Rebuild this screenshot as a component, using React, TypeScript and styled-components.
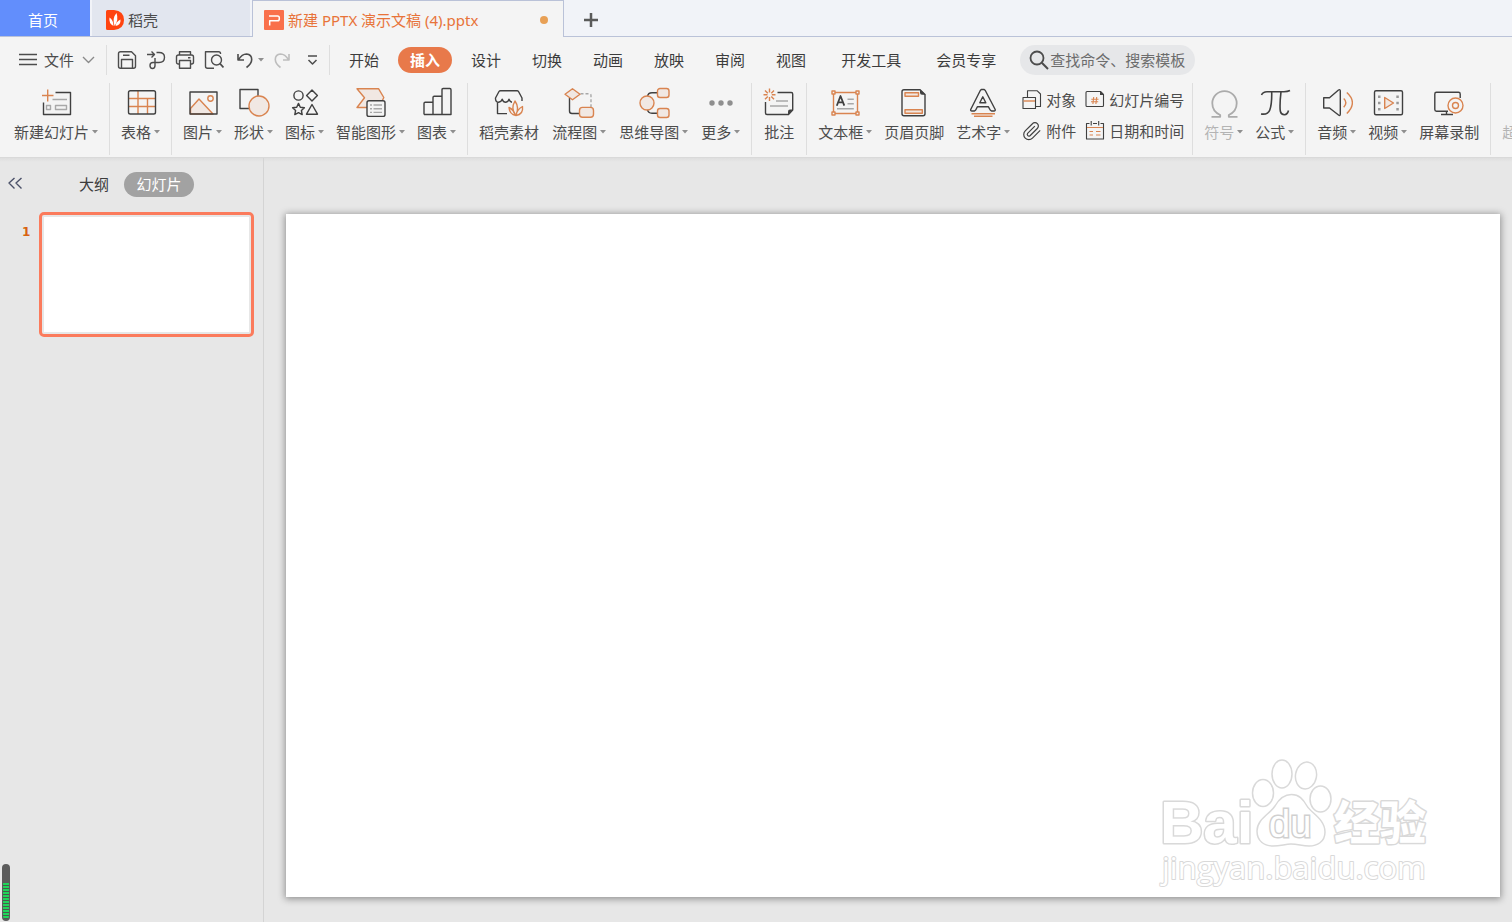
import React from "react";
import styled, { createGlobalStyle, css } from "styled-components";

const color = {
  chrome: "#f4f4f4",
  strip: "#f1f3f8",
  stripBorder: "#bac2d8",
  work: "#e7e7e7",
  text: "#4c4c4c",
  ink: "#404040",
  muted: "#b4b4b4",
  accent: "#e8794a",
  orange: "#d98450",
  tint: "#f1e8e3",
  line: "#dedede",
};

const GlobalStyle = createGlobalStyle`
  *, *::before, *::after { box-sizing: border-box; }
  body {
    margin: 0;
    background: ${color.work};
    color: ${color.text};
    font: 15px/20px "Noto Sans", "Noto Sans CJK SC", sans-serif;
  }
  button, input { font: inherit; color: inherit; }
`;

const PlainButton = styled.button`
  display: flex;
  align-items: center;
  justify-content: center;
  flex: none;
  margin: 0;
  padding: 0;
  border: 0;
  background: none;
  white-space: nowrap;
  cursor: pointer;
`;

const Window = styled.div`
  display: flex;
  flex-direction: column;
  min-height: 100vh;
  overflow: hidden;
`;

/* ---------- document tabs ---------- */

const TabStrip = styled.nav`
  display: flex;
  height: 37px;
  background: linear-gradient(${color.stripBorder}, ${color.stripBorder}) bottom / 100% 1px no-repeat ${color.strip};
`;

const HomeTab = styled(PlainButton)`
  width: 90px;
  height: 36px;
  padding-right: 4px;
  padding-top: 3px;
  background: #628efc;
  color: #fff;
`;

const DocTab = styled(PlainButton)<{ $active?: boolean; $width: number }>`
  justify-content: flex-start;
  gap: 4px;
  width: ${(p) => p.$width}px;
  height: 36px;
  margin-left: 2px;
  padding: 4px 14px 0;
  background: #e2e6ef;
  ${(p) =>
    p.$active &&
    css`
      height: 37px;
      padding: 2px 15px 0 11px;
      border: 1px solid ${color.stripBorder};
      border-bottom: 0;
      background: ${color.chrome};
      color: #e87339;
    `}
`;

const UnsavedDot = styled.span`
  width: 8px;
  height: 8px;
  margin-left: auto;
  border-radius: 50%;
  background: #e8a055;
`;

const AddTab = styled(PlainButton)`
  width: 54px;
  height: 36px;
  padding-top: 3px;
`;

/* ---------- menu row ---------- */

const MenuRow = styled.div`
  display: flex;
  align-items: center;
  height: 46px;
  background: ${color.chrome};
`;

const FileButton = styled(PlainButton)`
  gap: 7px;
  width: 107px;
  height: 30px;
  padding-left: 8px;
  border-right: 1px solid ${color.line};
`;

const QuickBar = styled.div`
  display: flex;
  align-items: center;
  gap: 9px;
  height: 30px;
  width: 223px;
  padding-left: 10px;
  flex: none;
  border-right: 1px solid ${color.line};
`;

const QuickButton = styled(PlainButton)<{ $disabled?: boolean }>`
  gap: 2px;
  color: ${(p) => (p.$disabled ? "#bdbdbd" : "#4c4c4c")};
`;

const Tabs = styled.div<{ $gap: number }>`
  display: flex;
  flex: none;
  gap: ${(p) => p.$gap}px;
  padding-left: ${(p) => p.$gap}px;
`;

const RibbonTab = styled(PlainButton)<{ $active?: boolean }>`
  height: 26px;
  padding: 0 12px;
  border-radius: 13px;
  color: #3c3c3c;
  ${(p) =>
    p.$active &&
    css`
      background: ${color.accent};
      color: #fff;
      font-weight: 700;
    `}
`;

const SearchBox = styled.label`
  display: flex;
  align-items: center;
  flex: none;
  width: 175px;
  height: 30px;
  margin-left: 12px;
  padding: 0 9px;
  border-radius: 15px;
  background: #e6e7e9;
`;

const SearchInput = styled.input`
  flex: 1;
  min-width: 0;
  height: 20px;
  margin-left: 1px;
  padding: 0;
  border: 0;
  outline: 0;
  background: none;
  &::placeholder {
    color: #6c6c6c;
    opacity: 1;
  }
`;

/* ---------- ribbon ---------- */

const Ribbon = styled.div`
  display: flex;
  height: 75px;
  padding-left: 3px;
  overflow: hidden;
  background: ${color.chrome};
  border-bottom: 1px solid #d9d9d9;
`;

const Group = styled.div<{ $gap?: number }>`
  display: flex;
  flex: none;
  gap: ${(p) => p.$gap ?? 0}px;
  height: 72px;
  padding: 0 5px;
  border-right: 1px solid ${color.line};
`;

const Tool = styled(PlainButton)<{ $disabled?: boolean }>`
  flex-direction: column;
  justify-content: flex-start;
  gap: 3px;
  padding: 4px 6px 0;
  color: ${(p) => (p.$disabled ? color.muted : color.text)};
`;

const ToolLabel = styled.span`
  display: flex;
  align-items: center;
  gap: 3px;
`;

const SmallTools = styled.div`
  display: grid;
  grid-template-columns: auto auto;
  align-content: start;
  gap: 11px 9px;
  padding: 7px 3px 0 6px;
`;

const SmallTool = styled(PlainButton)`
  justify-content: flex-start;
  gap: 4px;
  height: 20px;
`;

/* ---------- workspace ---------- */

const Workspace = styled.main`
  display: flex;
  flex: 1;
  background: linear-gradient(#dedede, ${color.work} 4px);
`;

const Sidebar = styled.aside`
  flex: none;
  width: 264px;
  padding-top: 14px;
  border-right: 1px solid #d4d4d4;
`;

const SideHead = styled.div`
  display: flex;
  align-items: center;
  height: 25px;
  padding-left: 7px;
`;

const OutlineTab = styled(PlainButton)`
  margin-left: 56px;
  padding-bottom: 2px;
  color: #3c3c3c;
`;

const SlidesTab = styled(PlainButton)`
  width: 70px;
  height: 25px;
  margin-left: 15px;
  padding-bottom: 2px;
  border-radius: 13px;
  background: #a2a2a2;
  color: #fff;
`;

const CollapseButton = styled(PlainButton)`
  padding-bottom: 2px;
`;

const ThumbRow = styled.div`
  display: flex;
  margin: 15px 9px 0 0;
`;

const ThumbNumber = styled.span`
  width: 39px;
  padding: 10px 0 0 22px;
  flex: none;
  color: #d8620f;
  font: 700 12px/20px "DejaVu Sans", sans-serif;
`;

const Thumb = styled(PlainButton)`
  flex: 1;
  height: 125px;
  border: 3px solid #fb7b5c;
  border-radius: 5px;
  background: #fff;
  box-shadow: inset 0 0 0 2px #e7e7e7;
`;

const Stage = styled.section`
  flex: 1;
  min-width: 0;
  padding: 56px 12px 24px 22px;
`;

const Slide = styled.div`
  position: relative;
  aspect-ratio: 16 / 9;
  background: #fff;
  box-shadow: 0 1px 7px 1px rgba(0, 0, 0, 0.38);
`;

const Watermark = styled.svg`
  position: absolute;
  right: 65px;
  bottom: 5px;
  width: 280px;
  height: 137px;
`;

const LevelMeter = styled.div`
  position: absolute;
  left: 2px;
  bottom: 1px;
  width: 8px;
  height: 57px;
  padding: 19px 1px 2px;
  border-radius: 4px;
  background: #5c5c5c;
`;

const LevelBars = styled.div`
  height: 100%;
  border-radius: 0 0 3px 3px;
  background: repeating-linear-gradient(#1fd65a 0 2px, #4a5a4e 2px 3px);
`;

/* ---------- icons ---------- */

const Svg = styled.svg<{ $w: number; $h: number }>`
  display: block;
  flex: none;
  width: ${(p) => p.$w}px;
  height: ${(p) => p.$h}px;
  fill: none;
  stroke: currentColor;
  stroke-width: 1.4;
  stroke-linejoin: round;
  .k { stroke: ${color.ink}; }
  .o { stroke: ${color.orange}; }
  .t { stroke: ${color.orange}; fill: ${color.tint}; }
  .g { stroke: #a8a8a8; }
  .ko { fill: ${color.ink}; stroke: none; }
  .c { fill: ${color.chrome}; }
`;

type IconProps = { w?: number; h?: number; children: React.ReactNode };
const Icon = ({ w = 32, h = w, children }: IconProps) => (
  <Svg $w={w} $h={h} viewBox={`0 0 ${w} ${h}`} aria-hidden="true">
    {children}
  </Svg>
);

const Caret = () => (
  <Icon w={6} h={4}>
    <path d="M0 0H6L3 3.6Z" fill="#8f8f8f" stroke="none" />
  </Icon>
);

const art = {
  newSlide: (
    <>
      <path className="k" d="M15.5 5.5H30.5V27.5H3.5V15.5" />
      <path className="o" d="M2 8.5H13.5M7.7 2.5V14.5" />
      <path className="g" d="M12.5 12.5H27M6.5 18.5H10.5V22.5H6.5ZM15.5 18.5H26.5V22.5H15.5Z" />
    </>
  ),
  table: (
    <>
      <path className="o" d="M13 4V27M22.5 11.5V27M4 11.5H30M4 19.5H30" />
      <rect className="k" x="3.5" y="3.7" width="27" height="23.3" rx="1.8" />
    </>
  ),
  picture: (
    <>
      <path className="t" d="M3.5 21.5L12 12L26 27H3.5Z" />
      <circle className="o" cx="23.5" cy="11.5" r="2.7" />
      <rect className="k" x="3" y="5" width="27" height="22" />
    </>
  ),
  shape: (
    <>
      <rect className="k" x="2" y="2.5" width="18" height="19" />
      <circle className="t" cx="21" cy="19" r="10" />
    </>
  ),
  glyphs: (
    <g className="k">
      <circle cx="9.5" cy="8.5" r="4.6" />
      <path d="M23 3L28.4 8.5L23 14L17.6 8.5Z" />
      <path d="M9.5 16.4L11.3 20.2L15.4 20.7L12.4 23.5L13.2 27.6L9.5 25.6L5.8 27.6L6.6 23.5L3.6 20.7L7.7 20.2Z" />
      <path d="M23 17.5L28.5 27.2H17.5Z" />
    </g>
  ),
  smart: (
    <>
      <path className="t" d="M2 1.7H23.5L28.8 10.5L24 20.5H2L9.5 10.8Z" />
      <rect className="k c" x="12" y="13.8" width="18" height="15.6" rx="2" />
      <path className="g" d="M15 18H17M18.5 18H27M15 21.7H17M18.5 21.7H27M15 25.4H17M18.5 25.4H27" />
    </>
  ),
  chart: (
    <path
      className="k"
      d="M3 27.5V16.5Q3 15.3 4.2 15.3H12V27.5M12 27.5V10.5Q12 9.3 13.2 9.3H21V27.5M21 27.5V2.7Q21 1.5 22.2 1.5H28.8Q30 1.5 30 2.7V27.5ZM3 27.5H30"
    />
  ),
  store: (
    <>
      <path className="k" d="M29 14V11L25.5 4.5Q25 3.7 24 3.7H7.5Q6.5 3.7 6 4.5L2.5 11Q2.3 15 5.5 15.3Q8.5 15 9.2 12.2Q10.2 15.3 12.8 15.3Q15.4 15 16 12.2Q17 15 19 15.2" />
      <path className="k" d="M4.5 15.3V26.6H14" />
      <path className="o" d="M22.5 28.3Q17.5 21.5 22 14Q26.500 20.5 23 28.300Q24 22.500 29.500 19.500Q30.500 27.500 23 28.500Q16.500 27.500 16 20.500Q20.500 22.500 22.500 28.300" />
    </>
  ),
  flow: (
    <>
      <path className="g" strokeDasharray="3 2" d="M17.5 6.700H26Q28 6.700 28 8.700V20.500" />
      <path className="k" d="M6.500 11V24Q6.500 26.500 9 26.500H17" />
      <path className="t" d="M9.500 1.800L17 7.300L9.500 12.800L2 7.300Z" />
      <rect className="t" x="16.500" y="20.400" width="14" height="9.800" rx="3" />
    </>
  ),
  mind: (
    <>
      <path className="k" d="M9.500 9.500Q10 5.700 14 5.700H20M9.500 22.500Q10 26.200 14 26.200H20" />
      <circle className="t" cx="9" cy="16" r="7" />
      <rect className="t" x="19.500" y="1.500" width="11.500" height="9" rx="2.500" />
      <rect className="t" x="19.500" y="21.500" width="11.500" height="9" rx="2.500" />
    </>
  ),
  more: (
    <g fill="#8f8f8f" stroke="none">
      <circle cx="7" cy="16" r="2.700" />
      <circle cx="16" cy="16" r="2.700" />
      <circle cx="25" cy="16" r="2.700" />
    </g>
  ),
  comment: (
    <>
      <path className="k" d="M14.500 5.500H28.300Q29.700 5.500 29.700 7V23L25.500 27.500H4Q2.500 27.500 2.500 26V15" />
      <path className="ko" d="M30 22.500L25 27.800V24.500Q25 22.500 27 22.500Z" />
      <path className="g" d="M13 14H25M7 19H25" />
      <path className="o" d="M6.500 1.500V5.500M6.500 10V14M.5 7.700H4.500M8.800 7.700H12.500M2 3.500L4.800 6.200M8.300 9.500L11 12.200M11 3.500L8.300 6.200M4.800 9.500L2 12.200" />
    </>
  ),
  textBox: (
    <>
      <path className="o" d="M4.500 5.500H28.500V26.500H4.500Z" />
      <path className="o c" d="M3 4H6V7H3ZM27 4H30V7H27ZM3 25H6V28H3ZM27 25H30V28H27Z" />
      <path className="k" d="M7.800 18.700L11.500 9L15.300 18.700M9.200 15.300H14" strokeWidth="1.800" />
      <path className="g" d="M18.500 12.200H24.800M18.500 16.700H24.800M8 21.700H24.800" />
    </>
  ),
  headerFooter: (
    <>
      <path className="k" d="M22 2.700H6Q4 2.700 4 4.700V26.800Q4 28.800 6 28.800H25Q27 28.800 27 26.800V7.500Z" />
      <path className="ko" d="M22 2.200L27.600 7.800H24Q22 7.800 22 5.800Z" />
      <path className="t" d="M7 5.700H20.500V9.200H7ZM7 22.700H24.300V26.300H7Z" />
    </>
  ),
  wordArt: (
    <>
      <path className="k" d="M14.300 2.500H17.200L18.300 3.500L28.200 22.500Q28.500 24 27 24H24.500L23.200 23L21.300 19.700H10.500L8.700 23L7.500 24H5Q3.300 24 3.700 22.500L13.300 3.500Z" />
      <path className="k" d="M15.800 9.800L18.800 15.800H12.800Z" />
      <path className="o" d="M4.500 26.700H28M7 29.300H25.500" />
    </>
  ),
  omega: (
    <path d="M3.500 29.800H12.200V28Q4.300 24.500 4.300 16.300A12.200 12.200 0 0 1 28.700 16.300Q28.700 24.500 20.800 28V29.800H29.500" stroke="#ababab" strokeWidth="1.800" />
  ),
  pi: (
    <path className="k" strokeWidth="1.600" d="M2.500 8Q4 4.700 8 4.700H25Q28.500 4.700 31 3.500M12.700 4.700Q13 17 10.800 23Q9 28 2 27M22 4.700Q20.500 18 21.300 24Q22 27.700 25.500 27.700Q28.500 27.500 29.500 23.500" />
  ),
  audio: (
    <>
      <path className="k" d="M2.700 10.700H8.500L17.500 3Q19.300 2 19.300 4V27Q19.300 29.500 17.500 28L8.500 21H2.700Z" />
      <path className="o" d="M22.700 11.500Q27 15.500 22.700 20.200M25.800 5.500Q37 15.500 25.800 26.500" />
    </>
  ),
  video: (
    <>
      <rect className="k" x="2.500" y="3.700" width="28" height="24" rx="1.500" />
      <path className="t" d="M12.700 10.500L21.500 16L12.700 21.500Z" />
      <path d="M6 8.500H8.500V11H6ZM6 14.800H8.500V17.300H6ZM6 21H8.500V23.500H6ZM24.300 8.500H26.800V11H24.300ZM24.300 14.800H26.800V17.300H24.300ZM24.300 21H26.800V23.500H24.300Z" fill="#999" stroke="none" />
    </>
  ),
  record: (
    <>
      <path className="k" d="M27.200 11V7Q27.200 5.300 25.500 5.300H3.500Q1.800 5.300 1.800 7V22.500Q1.800 24.200 3.500 24.200H15M13.500 24.200V27.500M8 27.500H20" />
      <circle className="o" cx="22.500" cy="18.500" r="7.500" />
      <circle className="o" cx="22.500" cy="18.500" r="3" />
    </>
  ),
};

const smallArt = {
  object: (
    <>
      <path className="k" d="M5.500 7.500V.700H15L18.500 4V16.500H13.500" strokeWidth="1.100" />
      <path className="k" d="M1 7.500H13.500V18.500H1Z" strokeWidth="1.100" />
      <path className="o" d="M1.500 11H13" />
    </>
  ),
  slideNumber: (
    <>
      <path className="k" strokeWidth="1.100" d="M15.500 1.500H2Q1 1.500 1 2.500V15.500Q1 16.500 2 16.500H17.500Q18.500 16.500 18.500 15.500V4.500Z" />
      <path className="ko" d="M15 1L19 5H15Z" />
      <path className="o" strokeWidth="1.100" d="M8.700 7L7.900 14M11.700 7L10.900 14M6.300 9.200H13.500M6 11.800H13.200" />
    </>
  ),
  clip: (
    <path
      className="k"
      transform="scale(.85)"
      d="M21.400 11.100L12.300 20.200A6 6 0 0 1 3.800 11.700L12.300 3.200A4 4 0 1 1 18 8.800L9.400 17.400A2 2 0 0 1 6.600 14.600L15.100 6.100"
    />
  ),
  calendar: (
    <>
      <path className="k" strokeWidth="1.100" d="M4.500 2.500H1.500V18H18.500V2.500H15.500M8 2.500H12M6.200 0V4.500M13.700 0V4.500" />
      <path className="o" strokeWidth="1.200" d="M2 6.500H18M4.500 10.500H8M11 10.500H15.500M4.500 14H8M11 14H15.500" />
    </>
  ),
};

const quickArt = {
  save: (
    <>
      <path d="M14.500 1.700H3.500Q1.500 1.700 1.500 3.700V16.300Q1.500 18.300 3.500 18.300H16.500Q18.500 18.300 18.500 16.300V5.700Z" />
      <path d="M4.500 18V9.500H15.500V18M6 5.200H12.500" />
    </>
  ),
  exportPdf: (
    <path d="M1 4.500H8M5.500 1.500L8.500 4.500L5.500 7.500M10.500 2.500H13Q18.500 2.500 18.500 7.300Q18.500 12.500 13 12.500H7Q4 12.500 4 15.500Q4 18.500 6.500 18.500Q9 18.500 9 15.500V8" />
  ),
  print: (
    <>
      <path d="M4.500 5V1.700H15.500V5M4.500 14H3.500Q1.500 14 1.500 12V7Q1.500 5 3.500 5H16.500Q18.500 5 18.500 7V12Q18.500 14 16.500 14H15.500M13 7.700H15.500" />
      <path d="M4.500 10.500H15.500V18.300H4.500Z" />
    </>
  ),
  preview: (
    <>
      <path d="M16.500 4V3.500Q16.500 1.700 14.700 1.700H1.500V16.300Q1.500 18.300 3.500 18.300H10" />
      <circle cx="12.500" cy="10" r="5" />
      <path d="M16 13.700L19.500 17.500" strokeWidth="1.800" />
    </>
  ),
};

const Undo = () => (
  <Icon w={20} h={18}>
    <path d="M5 3V9H11M5.500 8.700Q9 3 13.500 3Q18.700 3.500 18.700 8.500Q18.700 12.500 13.500 16.500" strokeWidth="1.600" />
  </Icon>
);

const Redo = () => (
  <Icon w={16} h={18}>
    <path d="M15 3V9H9M14.500 8.700Q11 3 6.500 3Q1.300 3.500 1.300 8.500Q1.300 12.500 6.500 16.500" strokeWidth="1.600" />
  </Icon>
);

/* ---------- data ---------- */

type ToolSpec = { label: string; icon?: keyof typeof art; menu?: boolean; disabled?: boolean };

const groups: { gap?: number; tools: ToolSpec[] }[] = [
  { tools: [{ label: "新建幻灯片", icon: "newSlide", menu: true }] },
  { tools: [{ label: "表格", icon: "table", menu: true }] },
  {
    tools: [
      { label: "图片", icon: "picture", menu: true },
      { label: "形状", icon: "shape", menu: true },
      { label: "图标", icon: "glyphs", menu: true },
      { label: "智能图形", icon: "smart", menu: true },
      { label: "图表", icon: "chart", menu: true },
    ],
  },
  {
    gap: 1,
    tools: [
      { label: "稻壳素材", icon: "store" },
      { label: "流程图", icon: "flow", menu: true },
      { label: "思维导图", icon: "mind", menu: true },
      { label: "更多", icon: "more", menu: true },
    ],
  },
  { tools: [{ label: "批注", icon: "comment" }] },
];

const textTools: ToolSpec[] = [
  { label: "文本框", icon: "textBox", menu: true },
  { label: "页眉页脚", icon: "headerFooter" },
  { label: "艺术字", icon: "wordArt", menu: true },
];

const smallTools: { label: string; icon: keyof typeof smallArt }[] = [
  { label: "对象", icon: "object" },
  { label: "幻灯片编号", icon: "slideNumber" },
  { label: "附件", icon: "clip" },
  { label: "日期和时间", icon: "calendar" },
];

const tailGroups: ToolSpec[][] = [
  [
    { label: "符号", icon: "omega", menu: true, disabled: true },
    { label: "公式", icon: "pi", menu: true },
  ],
  [
    { label: "音频", icon: "audio", menu: true },
    { label: "视频", icon: "video", menu: true },
    { label: "屏幕录制", icon: "record" },
  ],
  [{ label: "超链接", menu: true, disabled: true }],
];

const mainTabs = ["开始", "插入", "设计", "切换", "动画", "放映", "审阅", "视图"];
const extraTabs = ["开发工具", "会员专享"];

const ToolButton = ({ label, icon, menu, disabled }: ToolSpec) => (
  <Tool type="button" disabled={disabled} $disabled={disabled}>
    <Icon>{icon && art[icon]}</Icon>
    <ToolLabel>
      {label}
      {menu && <Caret />}
    </ToolLabel>
  </Tool>
);

const ToolGroup = ({ tools, gap }: { tools: ToolSpec[]; gap?: number }) => (
  <Group $gap={gap}>
    {tools.map((t) => (
      <ToolButton key={t.label} {...t} />
    ))}
  </Group>
);

const BaiduMark = () => (
  <Watermark viewBox="0 0 280 137" role="img" aria-label="Baidu 经验">
    <g fill="#fff" stroke="#d9d9d9" strokeWidth="3" paintOrder="stroke" strokeLinejoin="round">
      <text x="5" y="88" fontFamily="Liberation Sans, sans-serif" fontWeight="700" fontSize="60">
        Bai
      </text>
      <text x="179" y="84" fontFamily="Noto Sans CJK SC, sans-serif" fontWeight="900" fontSize="46">
        经验
      </text>
      <text x="7" y="124" fontFamily="Open Sans, sans-serif" fontSize="31" strokeWidth="2">
        jingyan.baidu.com
      </text>
    </g>
    <g fill="#fff" stroke="#d9d9d9" strokeWidth="1.500">
      <ellipse cx="108" cy="38" rx="10.500" ry="13.500" />
      <ellipse cx="127" cy="19" rx="10" ry="14" />
      <ellipse cx="151" cy="20.500" rx="10.500" ry="13.500" transform="rotate(10 151 20.500)" />
      <ellipse cx="165.500" cy="44" rx="10.500" ry="13" />
      <path d="M136.500 39.500C144 39.500 148 44 152 51C156 58 170 64 170 77C170 87 162 91 154 91C147 91 143 89 136 89C130 89 126 91 118 91C109 91 102 86 102 76C102 64 115 59 120 51C124 44 129 39.500 136.500 39.500Z" />
    </g>
    <text
      x="114"
      y="82"
      fontFamily="Liberation Sans, sans-serif"
      fontSize="38"
      fill="#fff"
      stroke="#d0d0d0"
      strokeWidth="3"
      paintOrder="stroke"
    >
      du
    </text>
  </Watermark>
);

export default function App() {
  return (
    <>
      <GlobalStyle />
      <Window>
        <TabStrip aria-label="文档">
          <HomeTab type="button">首页</HomeTab>
          <DocTab type="button" $width={158}>
            <Icon w={18} h={20}>
              <path d="M1.500 0H8Q18 1 18 10Q18 19 8 20H1.500Q0 20 0 18.500V1.500Q0 0 1.500 0Z" fill="#ff4410" stroke="none" />
              <path d="M8.500 16Q6 8 10.500 3Q13 10 8.500 16ZM7.500 16Q2.500 13.500 3.500 7.500Q7.500 10 7.500 16ZM9.500 16Q10 11.500 14.500 9.500Q15 15 9.500 16Z" fill="#fff" stroke="none" />
            </Icon>
            稻壳
          </DocTab>
          <DocTab type="button" $active $width={312}>
            <Icon w={20}>
              <rect width="20" height="20" rx="1" fill="#f9704b" stroke="none" />
              <path d="M5 6H13.500Q15.300 6 15.300 7.800V9Q15.300 10.800 13.500 10.800H5.700V15.500" stroke="#fff" strokeWidth="1.500" />
            </Icon>
            新建 PPTX 演示文稿 (4).pptx
            <UnsavedDot />
          </DocTab>
          <AddTab type="button" aria-label="新建标签">
            <Icon w={16}>
              <path d="M8 1V15M1 8H15" stroke="#5a5a5a" strokeWidth="2.500" />
            </Icon>
          </AddTab>
        </TabStrip>

        <MenuRow>
          <FileButton type="button">
            <Icon w={18} h={14}>
              <path d="M0 1.500H18M0 6.500H18M0 11.500H18" />
            </Icon>
            文件
            <Icon w={14} h={8}>
              <path d="M2 1L7.500 6.500L13 1" stroke="#8a8a8a" />
            </Icon>
          </FileButton>
          <QuickBar>
            <QuickButton type="button" aria-label="保存"><Icon w={20}>{quickArt.save}</Icon></QuickButton>
            <QuickButton type="button" aria-label="输出为PDF"><Icon w={20}>{quickArt.exportPdf}</Icon></QuickButton>
            <QuickButton type="button" aria-label="打印"><Icon w={20}>{quickArt.print}</Icon></QuickButton>
            <QuickButton type="button" aria-label="打印预览"><Icon w={20}>{quickArt.preview}</Icon></QuickButton>
            <QuickButton type="button" aria-label="撤销">
              <Undo />
              <Icon w={10} h={4}>
                <path d="M3 0H9L6 3.600Z" fill="#8f8f8f" stroke="none" />
              </Icon>
            </QuickButton>
            <QuickButton type="button" aria-label="恢复" disabled $disabled><Redo /></QuickButton>
            <QuickButton type="button" aria-label="自定义快速访问工具栏">
              <Icon w={26} h={12}>
                <path d="M9 2H18M9.500 6L13.500 10L17.500 6" strokeWidth="1.500" />
              </Icon>
            </QuickButton>
          </QuickBar>
          <Tabs $gap={7}>
            {mainTabs.map((t) => (
              <RibbonTab key={t} type="button" $active={t === "插入"}>{t}</RibbonTab>
            ))}
          </Tabs>
          <Tabs $gap={11}>
            {extraTabs.map((t) => (
              <RibbonTab key={t} type="button">{t}</RibbonTab>
            ))}
          </Tabs>
          <SearchBox>
            <Icon w={20}>
              <circle cx="8" cy="8" r="6.500" strokeWidth="1.800" />
              <path d="M12.800 12.800L19 19" strokeWidth="2" />
            </Icon>
            <SearchInput aria-label="搜索" placeholder="查找命令、搜索模板" />
          </SearchBox>
        </MenuRow>

        <Ribbon>
          {groups.map((g) => (
            <ToolGroup key={g.tools[0].label} {...g} />
          ))}
          <Group>
            {textTools.map((t) => (
              <ToolButton key={t.label} {...t} />
            ))}
            <SmallTools>
              {smallTools.map((t) => (
                <SmallTool key={t.label} type="button">
                  <Icon w={20}>{smallArt[t.icon]}</Icon>
                  {t.label}
                </SmallTool>
              ))}
            </SmallTools>
          </Group>
          {tailGroups.map((g) => (
            <ToolGroup key={g[0].label} tools={g} />
          ))}
        </Ribbon>

        <Workspace>
          <Sidebar>
            <SideHead>
              <CollapseButton type="button" aria-label="收起">
                <Icon w={16} h={16}>
                  <path d="M7.500 2L2 7L7.500 12.500M14.500 2L9 7L14.500 12.500" stroke="#4a5068" />
                </Icon>
              </CollapseButton>
              <OutlineTab type="button">大纲</OutlineTab>
              <SlidesTab type="button">幻灯片</SlidesTab>
            </SideHead>
            <ThumbRow>
              <ThumbNumber>1</ThumbNumber>
              <Thumb type="button" aria-label="幻灯片 1" />
            </ThumbRow>
          </Sidebar>
          <Stage>
            <Slide>
              <BaiduMark />
            </Slide>
          </Stage>
        </Workspace>
        <LevelMeter>
          <LevelBars />
        </LevelMeter>
      </Window>
    </>
  );
}
